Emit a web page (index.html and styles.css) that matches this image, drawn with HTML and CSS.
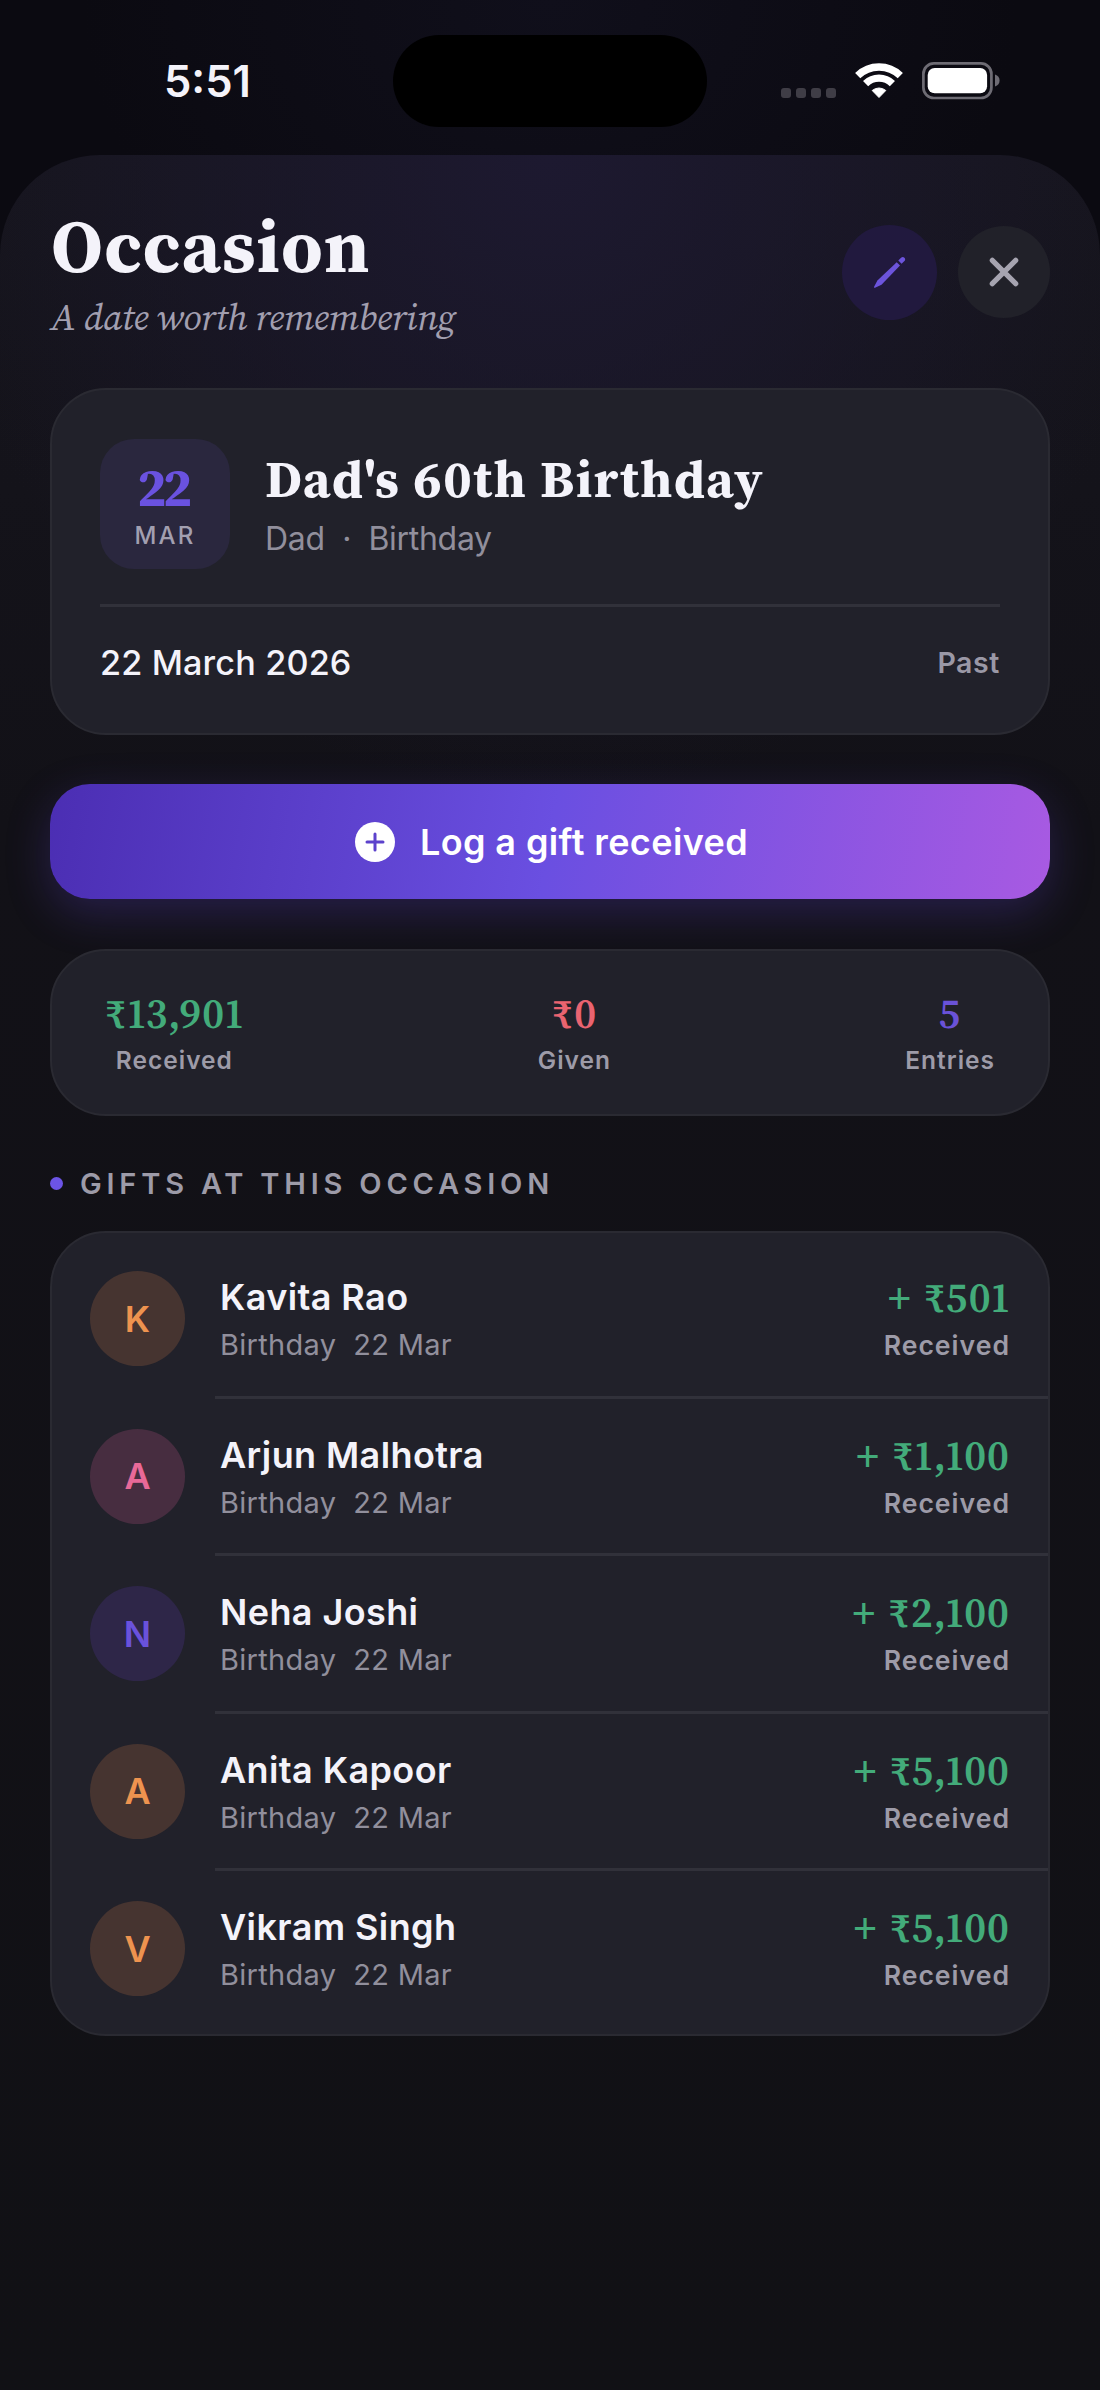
FILE: index.html
```html
<!DOCTYPE html>
<html lang="en">
<head>
<meta charset="utf-8">
<title>Occasion</title>
<link rel="stylesheet" href="styles.css">
</head>
<body>
<div class="statusbar">
  <span class="time">5:51</span>
  <span class="island"></span>
  <span class="indicators">
    <span class="cell"><i></i><i></i><i></i><i></i></span>
    <svg class="wifi" width="48" height="37" viewBox="0 0 48 37"><g fill="none" stroke="#fff" stroke-width="7.4"><path d="M2.700 13.600a30.600 30.600 0 0 1 42.600 0"/><path d="M10.600 21.600a19.200 19.200 0 0 1 26.800 0"/></g><path fill="#fff" stroke="#fff" stroke-linejoin="round" d="M24 35.500l-6.800-7a10.500 10.500 0 0 1 13.600 0z"/></svg>
    <svg class="battery" width="78" height="38" viewBox="0 0 78 38"><rect x="1.400" y="1.400" width="68" height="34.600" rx="10.500" fill="none" stroke="#6e6c74" stroke-width="2.700"/><rect x="5.700" y="6" width="59.400" height="25.200" rx="7" fill="#fff"/><path d="M73 12.500c3 .8 4.600 3.200 4.600 6s-1.600 5.200-4.600 6z" fill="#6e6c74"/></svg>
  </span>
</div>
<main class="sheet">
  <header class="head">
    <div class="head-text">
      <h1 class="title">Occasion</h1>
      <p class="subtitle">A date worth remembering</p>
    </div>
    <button class="round edit" aria-label="Edit"><svg width="34" height="34" viewBox="0 0 34 34" fill="#6c54dc"><path d="M23.700 7.200l3.300 3.300L8.500 29.700 2 32.700c-.7.300-1.200-.200-.9-.9L4.400 25.600z"/><path d="M25.300 5.500l2.500-2.600c1.300-1.300 2.600-1.200 3.600-.2 1 1 1.100 2.300-.2 3.600l-2.600 2.500z"/></svg></button>
    <button class="round close" aria-label="Close"><svg width="30" height="30" viewBox="0 0 30 30" fill="none" stroke="#a6a4b0" stroke-width="5.200" stroke-linecap="round"><path d="M3.300 3.300l23.400 23.400M26.700 3.300L3.300 26.700"/></svg></button>
  </header>

  <section class="card event">
    <div class="event-top">
      <div class="datebox"><span class="day">22</span><span class="month">MAR</span></div>
      <div class="event-info">
        <h2 class="event-name">Dad's 60th Birthday</h2>
        <p class="event-meta">Dad&nbsp; ·&nbsp; Birthday</p>
      </div>
    </div>
    <div class="event-bottom"><span class="full-date">22 March 2026</span><span class="past">Past</span></div>
  </section>

  <button class="log"><svg width="40" height="40" viewBox="0 0 40 40"><circle cx="20" cy="20" r="20" fill="#fff"/><path d="M20 12v16M12 20h16" stroke="#5c42cc" stroke-width="3" stroke-linecap="round"/></svg><span>Log a gift received</span></button>

  <section class="card stats">
    <div class="stat"><b class="green">₹13,901</b><span>Received</span></div>
    <div class="stat"><b class="red">₹0</b><span>Given</span></div>
    <div class="stat"><b class="violet">5</b><span>Entries</span></div>
  </section>

  <h3 class="section">Gifts at this occasion</h3>

  <ul class="card gifts">
    <li class="gift"><span class="avatar orange">K</span><div class="who"><b>Kavita Rao</b><span>Birthday&nbsp; 22 Mar</span></div><div class="amount"><b>+ ₹501</b><span>Received</span></div></li>
    <li class="gift"><span class="avatar pink">A</span><div class="who"><b>Arjun Malhotra</b><span>Birthday&nbsp; 22 Mar</span></div><div class="amount"><b>+ ₹1,100</b><span>Received</span></div></li>
    <li class="gift"><span class="avatar purple">N</span><div class="who"><b>Neha Joshi</b><span>Birthday&nbsp; 22 Mar</span></div><div class="amount"><b>+ ₹2,100</b><span>Received</span></div></li>
    <li class="gift"><span class="avatar orange">A</span><div class="who"><b>Anita Kapoor</b><span>Birthday&nbsp; 22 Mar</span></div><div class="amount"><b>+ ₹5,100</b><span>Received</span></div></li>
    <li class="gift"><span class="avatar orange">V</span><div class="who"><b>Vikram Singh</b><span>Birthday&nbsp; 22 Mar</span></div><div class="amount"><b>+ ₹5,100</b><span>Received</span></div></li>
  </ul>
</main>
</body>
</html>
```
FILE: styles.css
```css
* { box-sizing: border-box; margin: 0; padding: 0; }
body {
  width: 1100px;
  height: 2390px;
  overflow: hidden;
  background: radial-gradient(ellipse 520px 420px at 50% 0, #100f1b, #0b0a11 90%);
  color: #f4f3fa;
  font-family: Inter, "Liberation Sans", sans-serif;
}
button { border: 0; font: inherit; color: inherit; }
.title, .subtitle, .event-name, .day, .stat b, .amount b {
  font-family: "Source Serif 4", "Liberation Serif", serif;
  font-variant-numeric: lining-nums proportional-nums;
}

/* Status bar */
.statusbar {
  display: grid;
  grid-template-columns: 393px 314px 1fr;
  height: 155px;
  padding-top: 35px;
}
.time { padding-left: 164px; font-size: 43.500px; font-weight: 600; line-height: 93px; }
.island { height: 92px; border-radius: 46px; background: #000; }
.indicators { display: flex; align-items: flex-start; padding: 27px 0 0 74px; }
.cell { display: flex; gap: 5.500px; padding-top: 26px; margin-right: 19px; }
.cell i { width: 9.500px; height: 9.500px; border-radius: 3px; background: #3f3d46; }
.wifi { margin-right: 19px; }

/* Sheet and header */
.sheet {
  height: 2235px;
  padding: 55px 50px 0;
  border-radius: 100px 100px 0 0;
  background:
    radial-gradient(ellipse 620px 640px at 50% 0, #1d1930, #17142300 100%),
    linear-gradient(#16151d, #121117 30%, #111115);
}
.head { display: flex; align-items: center; height: 124px; margin-bottom: 54px; }
.head-text { flex: 1; padding: 7px 0 0 1px; }
.title { font-size: 74px; font-weight: 700; line-height: 83px; letter-spacing: 1.200px; }
.subtitle { font-size: 37.300px; font-style: italic; line-height: 58px; letter-spacing: -.45px; color: #a29fb0; }
.round { display: grid; place-items: center; border-radius: 50%; }
.edit { width: 95px; height: 95px; background: #21193e; margin-right: 21px; }
.close { width: 92px; height: 92px; background: #212129; }

/* Cards */
.card { border: 2px solid #2a2a32; border-radius: 56px; background: #21212a; }
.event { height: 347px; padding: 49px 48px 0; }
.event-top { display: flex; gap: 35px; padding-bottom: 35px; border-bottom: 3px solid #31313a; }
.datebox {
  display: flex; flex-direction: column; align-items: center;
  width: 130px; height: 130px; padding-top: 20px;
  border-radius: 34px; background: #2a273e;
}
.day { font-size: 54px; font-weight: 700; line-height: 56px; letter-spacing: -2.500px; margin-left: -3px; color: #6a52e0; }
.month { font-size: 24px; font-weight: 500; line-height: 42px; letter-spacing: 2.200px; color: #a29fb0; }
.event-name { font-size: 52.500px; font-weight: 700; line-height: 60px; letter-spacing: 1.450px; margin-top: 10px; }
.event-meta { font-size: 32px; line-height: 60px; letter-spacing: -.3px; color: #918f9c; }
.event-bottom { display: flex; justify-content: space-between; align-items: center; height: 110px; }
.full-date { font-size: 34.200px; font-weight: 500; letter-spacing: .15px; }
.past { font-size: 28.500px; font-weight: 600; letter-spacing: .6px; color: #9a98a6; }
.log {
  display: flex; align-items: center; justify-content: center; gap: 25px;
  width: 100%; height: 115px; padding-left: 3px; margin: 49px 0 50px;
  border-radius: 40px;
  background: linear-gradient(100deg, #4b2eb3, #6a4fe1 50%, #a85ae2);
  box-shadow: 0 14px 44px rgba(100, 70, 220, .26);
  font-size: 36px; font-weight: 600; letter-spacing: .4px; color: #fff;
}
.stats { display: flex; justify-content: space-between; height: 167px; padding: 37px 53px 0; }
.stat { display: flex; flex-direction: column; align-items: center; }
.stat b { font-size: 42px; font-weight: 600; line-height: 50px; letter-spacing: 1px; }
.stat span { font-size: 24.500px; font-weight: 600; line-height: 44px; letter-spacing: 1px; color: #9d9ba8; }
.green, .amount b { color: #43ab7a; }
.red { color: #ea6470; }
.violet { color: #6a52d8; }

/* Gift list */
.section {
  display: flex; align-items: center; gap: 17px; height: 115px; padding-top: 19px;
  font-size: 29px; font-weight: 600; letter-spacing: 4.800px; text-transform: uppercase; color: #9d9ba8;
}
.section::before { content: ""; width: 13px; height: 13px; border-radius: 50%; background: #6c54e6; }
.gifts { list-style: none; padding: 8px 0 7px; }
.gift { display: flex; height: 157.600px; padding: 30px 38px 0 38px; align-items: flex-start; position: relative; }
.gift + .gift::before { content: ""; position: absolute; left: 163px; right: 0; top: -3px; height: 3px; background: #31313a; }
.gift:last-child { height: 156px; }
.avatar { display: grid; place-items: center; width: 95px; height: 95px; border-radius: 50%; font-size: 36px; font-weight: 600; }
.orange { background: #463430; color: #ee934f; }
.pink { background: #472d40; color: #e96998; }
.purple { background: #2e2648; color: #6a52dc; }
.who { flex: 1; padding-left: 35px; display: flex; flex-direction: column; }
.who b { font-size: 36px; font-weight: 600; line-height: 52px; letter-spacing: .4px; }
.who span { font-size: 29px; line-height: 43px; letter-spacing: .3px; color: #918f9c; }
.amount { display: flex; flex-direction: column; align-items: flex-end; }
.amount b { font-size: 42px; font-weight: 600; line-height: 53px; letter-spacing: 1px; word-spacing: 2px; }
.amount span { font-size: 26.600px; font-weight: 600; line-height: 43px; letter-spacing: 1px; color: #9d9ba8; }
```
